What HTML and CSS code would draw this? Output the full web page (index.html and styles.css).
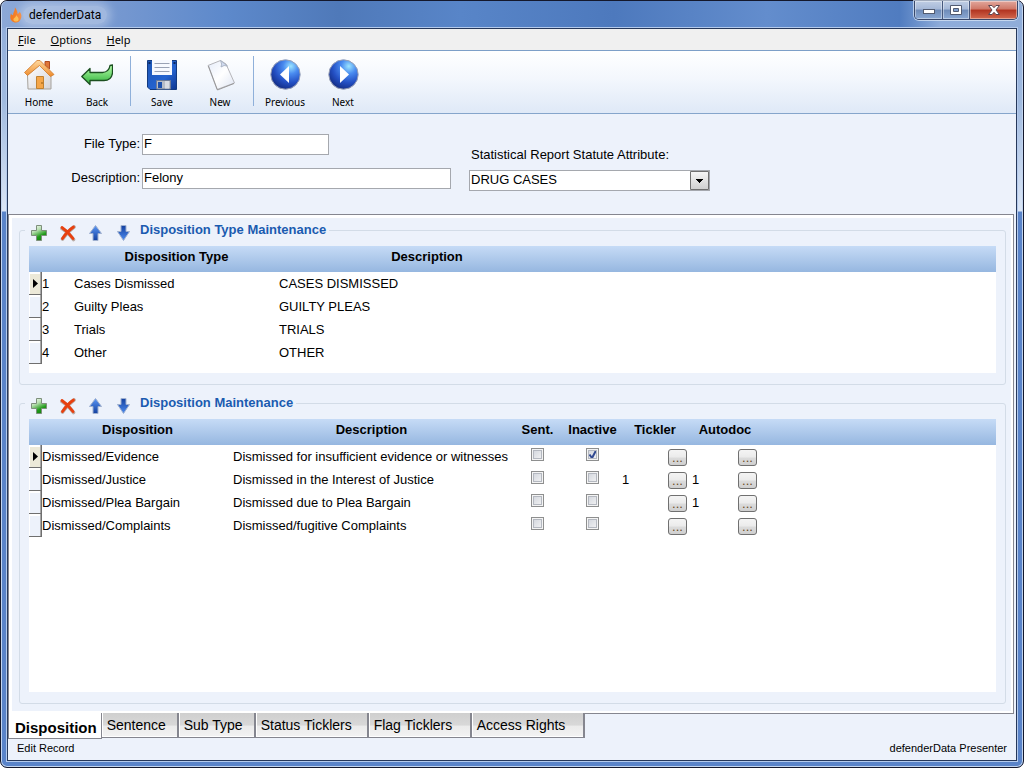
FILE: index.html
```
<!DOCTYPE html>
<html lang="en">
<head>
    <meta charset="UTF-8">
    <title>defenderData</title>
    <link rel="stylesheet" href="styles.css">
</head>
<body>
<!-- Shared icons -->
<svg class="sprite" aria-hidden="true">
    <defs>
        <linearGradient id="green" x1="0" y1="0" x2=".5" y2="1">
            <stop offset="0" stop-color="#ffffff"/>
            <stop offset=".4" stop-color="#b9dfb2"/>
            <stop offset=".8" stop-color="#1f9a18"/>
            <stop offset="1" stop-color="#178a12"/>
        </linearGradient>
        <linearGradient id="blueUp" x1="0" y1="0" x2="0" y2="1">
            <stop offset="0" stop-color="#5b97f5"/>
            <stop offset="1" stop-color="#123f9f"/>
        </linearGradient>
        <linearGradient id="blueDown" x1="0" y1="0" x2="0" y2="1">
            <stop offset="0" stop-color="#123f9f"/>
            <stop offset="1" stop-color="#4f8df0"/>
        </linearGradient>
        <radialGradient id="ball" cx=".68" cy=".22" r=".85">
            <stop offset="0" stop-color="#9be4ff"/>
            <stop offset=".3" stop-color="#4a8cf0"/>
            <stop offset=".65" stop-color="#2450c4"/>
            <stop offset="1" stop-color="#122a80"/>
        </radialGradient>
    </defs>
    <symbol id="icon-add" viewBox="0 0 18 18">
        <path d="M6.500 1.500h5v5h5v5h-5v5h-5v-5h-5v-5h5z" fill="url(#green)" stroke="#7d8f7b"/>
    </symbol>
    <symbol id="icon-delete" viewBox="0 0 18 18">
        <path d="M4 4.500Q10 8 15.500 15.500M16 3Q9.500 7.500 4.500 15" fill="none" stroke="#b9aaa4" stroke-width="3.600" stroke-linecap="round"/>
        <path d="M4 3.500Q10 7.500 15 14.500M15.500 3Q9.500 7 4.500 14.500" fill="none" stroke="#e8400f" stroke-width="2.800" stroke-linecap="round"/>
    </symbol>
    <symbol id="icon-up" viewBox="0 0 18 18">
        <path d="M9.500 1.500L15.500 9.500H12V16.500H7V9.500H3.500z" fill="url(#blueUp)" stroke="#9fb0cf"/>
    </symbol>
    <symbol id="icon-down" viewBox="0 0 18 18">
        <path d="M7 1.500h5v6h3.500L9.500 16.500 3.500 7.500H7z" fill="url(#blueDown)" stroke="#9fb0cf"/>
    </symbol>
</svg>

<div class="window">
    <header class="titlebar">
        <svg class="app-icon" viewBox="0 0 14 16" aria-hidden="true">
            <path d="M6 .5C8 3 8.500 5 8.500 7 10 6.500 10.500 5.500 10.600 4.500 12.500 7 13.200 9.500 11.500 12.500 10.500 14.500 9 15.500 7 15.500 3.500 15.500 1 13 1.300 9.500 1.400 8.500 1.600 7.500 2 6.500 2.500 7.500 3 8 4 8.200 4 5.500 6 4 6 .5z" fill="#f47a20"/>
            <path d="M7.500 8C8 10 10 10.500 9.500 13 9 15 5 15 4.500 13 4 11 7 10.500 7.500 8z" fill="#fdb94a"/>
        </svg>
        <span class="title">defenderData</span>
        <div class="window-buttons">
            <button type="button" class="win-btn minimize" aria-label="Minimize">
                <svg width="14" height="12" viewBox="0 0 14 12"><rect x="1.500" y="5.500" width="11" height="4" fill="#fff" stroke="#525b70"/></svg>
            </button>
            <button type="button" class="win-btn maximize" aria-label="Maximize">
                <svg width="12" height="12" viewBox="0 0 12 12"><path d="M.5 1.500h11v9H.5z" fill="#fff" stroke="#525b70"/><path d="M3.500 4.500h5v3h-5z" fill="#7f9fcf" stroke="#525b70"/></svg>
            </button>
            <button type="button" class="win-btn close" aria-label="Close">
                <svg width="12" height="12" viewBox="0 0 12 12"><path d="M.6 1.500H4L6 3.700 8 1.500h3.400L8 6l3.400 4.500H8L6 8.300 4 10.500H.6L4 6z" fill="#fff" stroke="#5c4550"/></svg>
            </button>
        </div>
    </header>

    <div class="client">
        <nav class="menubar">
            <button type="button"><u>F</u>ile</button>
            <button type="button"><u>O</u>ptions</button>
            <button type="button"><u>H</u>elp</button>
        </nav>

        <div class="toolbar">
            <button type="button" class="tool">
                <svg viewBox="0 0 32 32" aria-hidden="true">
                    <defs>
                        <linearGradient id="roof" x1="0" y1="0" x2="0" y2="1"><stop offset="0" stop-color="#ffd9a0"/><stop offset="1" stop-color="#ee8a2a"/></linearGradient>
                        <linearGradient id="wall" x1="0" y1="0" x2="1" y2="1"><stop offset="0" stop-color="#fff"/><stop offset="1" stop-color="#d4d4d8"/></linearGradient>
                    </defs>
                    <path d="M22 2.500h4.500V10L22 6z" fill="#e07638" stroke="#b04c20"/>
                    <path d="M4.500 16L17 5.500 28 16V30H5z" fill="url(#wall)" stroke="#a6a29c"/>
                    <path d="M14 1.500L1.500 13.500 4.500 16.500 16.500 6.500 27.500 17.500 31 15.500 17 1.500z" fill="url(#roof)" stroke="#d07a28" stroke-width=".8"/>
                    <path d="M13.500 17.500h7V29.500h-7z" fill="#f5a648" stroke="#c1812f"/>
                    <circle cx="19" cy="24" r=".8" fill="#875211"/>
                </svg>
                <span>Home</span>
            </button>
            <button type="button" class="tool">
                <svg viewBox="0 0 32 32" aria-hidden="true">
                    <defs><linearGradient id="back" x1="0" y1="0" x2="0" y2="1"><stop offset="0" stop-color="#b8ffab"/><stop offset="1" stop-color="#2fb13b"/></linearGradient></defs>
                    <path d="M.8 17.500L9 9.500V13.500H21.500Q28 13 29 6.500L31.500 6V14Q30.500 21.500 23 21.500H9V25.500z" fill="url(#back)" stroke="#1b4f20" stroke-width="1.300" stroke-linejoin="round"/>
                </svg>
                <span>Back</span>
            </button>
            <div class="separator"></div>
            <button type="button" class="tool">
                <svg viewBox="0 0 32 32" aria-hidden="true">
                    <defs><linearGradient id="disk" x1="0" y1="0" x2="1" y2="1"><stop offset="0" stop-color="#1c55b4"/><stop offset=".6" stop-color="#2563d0"/><stop offset="1" stop-color="#0c3590"/></linearGradient></defs>
                    <path d="M1.500 1.500h29v29H4L1.500 28z" fill="url(#disk)" stroke="#123a80"/>
                    <path d="M6 1h20v15H6z" fill="#f7f9ff"/>
                    <path d="M8.500 4.500h15M8.500 8.500h15M8.500 12.500h15" stroke="#9aa2b5"/>
                    <path d="M10.500 21.500h14v8.500h-14z" fill="#b8bcc6" stroke="#6f7c96"/>
                    <path d="M12 23h4v6h-4z" fill="#1d50ad"/>
                    <path d="M19 22v7.500h4V22z" fill="#dadce2"/>
                    <path d="M2.500 3h2v2h-2zM27.500 3h2v2h-2z" fill="#0b2860"/>
                </svg>
                <span>Save</span>
            </button>
            <button type="button" class="tool">
                <svg viewBox="0 0 32 32" aria-hidden="true">
                    <defs><linearGradient id="page" x1="0" y1="0" x2="1" y2="1"><stop offset="0" stop-color="#e5ecfa"/><stop offset=".5" stop-color="#fff"/><stop offset="1" stop-color="#dde4f2"/></linearGradient></defs>
                    <path d="M4 6.500L16.500 1.500 22 5 30.500 24 13 30.500z" fill="url(#page)" stroke="#b5b5ba"/>
                    <path d="M4.500 7L13.500 31 30 24.500" fill="none" stroke="#8d8c8c" stroke-width=".8"/>
                    <path d="M16.500 1.500Q18.500 5.500 17 8 20 5.500 23.500 7z" fill="#d1dcf1" stroke="#9fa9bb" stroke-width=".8"/>
                </svg>
                <span>New</span>
            </button>
            <div class="separator"></div>
            <button type="button" class="tool">
                <svg viewBox="0 0 32 32" aria-hidden="true">
                    <circle cx="16.500" cy="15.500" r="14.700" fill="url(#ball)" stroke="#99a0b5"/>
                    <path d="M20 7v17l-9-8.500z" fill="#fff"/>
                </svg>
                <span>Previous</span>
            </button>
            <button type="button" class="tool">
                <svg viewBox="0 0 32 32" aria-hidden="true">
                    <circle cx="16.500" cy="15.500" r="14.700" fill="url(#ball)" stroke="#99a0b5"/>
                    <path d="M13 7v17l9-8.500z" fill="#fff"/>
                </svg>
                <span>Next</span>
            </button>
        </div>

        <!-- Record header -->
        <form class="record">
            <div class="record-fields">
                <label for="fileType">File Type:</label>
                <input type="text" id="fileType" class="short" value="F">
                <label for="description">Description:</label>
                <input type="text" id="description" value="Felony">
            </div>
            <div class="record-statute">
                <label for="statute">Statistical Report Statute Attribute:</label>
                <select id="statute">
                    <option>DRUG CASES</option>
                </select>
            </div>
        </form>

        <!-- Disposition tab -->
        <main class="tab-page">
            <div class="panel">
                <fieldset>
                    <legend>
                        <span class="legend-row">
                            <button type="button" aria-label="Add type"><svg><use href="#icon-add"/></svg></button>
                            <button type="button" aria-label="Delete type"><svg><use href="#icon-delete"/></svg></button>
                            <button type="button" aria-label="Move type up"><svg><use href="#icon-up"/></svg></button>
                            <button type="button" aria-label="Move type down"><svg><use href="#icon-down"/></svg></button>
                            <span class="legend-text">Disposition Type Maintenance</span>
                        </span>
                    </legend>
                    <div class="grid types">
                        <table>
                            <colgroup>
                                <col class="c-handle"><col class="c-num"><col class="c-type"><col class="c-type-desc"><col>
                            </colgroup>
                            <thead>
                                <tr><th></th><th></th><th>Disposition Type</th><th>Description</th><th></th></tr>
                            </thead>
                            <tbody>
                                <tr class="current"><td class="handle"></td><td>1</td><td>Cases Dismissed</td><td>CASES DISMISSED</td><td></td></tr>
                                <tr><td class="handle"></td><td>2</td><td>Guilty Pleas</td><td>GUILTY PLEAS</td><td></td></tr>
                                <tr><td class="handle"></td><td>3</td><td>Trials</td><td>TRIALS</td><td></td></tr>
                                <tr><td class="handle"></td><td>4</td><td>Other</td><td>OTHER</td><td></td></tr>
                            </tbody>
                        </table>
                    </div>
                </fieldset>

                <fieldset class="fill">
                    <legend>
                        <span class="legend-row">
                            <button type="button" aria-label="Add disposition"><svg><use href="#icon-add"/></svg></button>
                            <button type="button" aria-label="Delete disposition"><svg><use href="#icon-delete"/></svg></button>
                            <button type="button" aria-label="Move disposition up"><svg><use href="#icon-up"/></svg></button>
                            <button type="button" aria-label="Move disposition down"><svg><use href="#icon-down"/></svg></button>
                            <span class="legend-text">Disposition Maintenance</span>
                        </span>
                    </legend>
                    <div class="grid">
                        <table>
                            <colgroup>
                                <col class="c-handle"><col class="c-disp"><col class="c-desc"><col class="c-check"><col class="c-check"><col class="c-link"><col class="c-link"><col>
                            </colgroup>
                            <thead>
                                <tr><th></th><th>Disposition</th><th>Description</th><th>Sent.</th><th>Inactive</th><th>Tickler</th><th>Autodoc</th><th></th></tr>
                            </thead>
                            <tbody>
                                <tr class="current">
                                    <td class="handle"></td><td>Dismissed/Evidence</td><td>Dismissed for insufficient evidence or witnesses</td>
                                    <td class="check"><input type="checkbox" aria-label="Sent."></td>
                                    <td class="check"><input type="checkbox" aria-label="Inactive" checked></td>
                                    <td><div class="link-cell"><span></span><button type="button">...</button></div></td>
                                    <td><div class="link-cell"><span></span><button type="button">...</button></div></td>
                                    <td></td>
                                </tr>
                                <tr>
                                    <td class="handle"></td><td>Dismissed/Justice</td><td>Dismissed in the Interest of Justice</td>
                                    <td class="check"><input type="checkbox" aria-label="Sent."></td>
                                    <td class="check"><input type="checkbox" aria-label="Inactive"></td>
                                    <td><div class="link-cell"><span>1</span><button type="button">...</button></div></td>
                                    <td><div class="link-cell"><span>1</span><button type="button">...</button></div></td>
                                    <td></td>
                                </tr>
                                <tr>
                                    <td class="handle"></td><td>Dismissed/Plea Bargain</td><td>Dismissed due to Plea Bargain</td>
                                    <td class="check"><input type="checkbox" aria-label="Sent."></td>
                                    <td class="check"><input type="checkbox" aria-label="Inactive"></td>
                                    <td><div class="link-cell"><span></span><button type="button">...</button></div></td>
                                    <td><div class="link-cell"><span>1</span><button type="button">...</button></div></td>
                                    <td></td>
                                </tr>
                                <tr>
                                    <td class="handle"></td><td>Dismissed/Complaints</td><td>Dismissed/fugitive Complaints</td>
                                    <td class="check"><input type="checkbox" aria-label="Sent."></td>
                                    <td class="check"><input type="checkbox" aria-label="Inactive"></td>
                                    <td><div class="link-cell"><span></span><button type="button">...</button></div></td>
                                    <td><div class="link-cell"><span></span><button type="button">...</button></div></td>
                                    <td></td>
                                </tr>
                            </tbody>
                        </table>
                    </div>
                </fieldset>
            </div>
        </main>

        <div class="tabs">
            <button type="button" class="active">Disposition</button>
            <button type="button" class="tab-small">Sentence</button>
            <button type="button" class="tab-small">Sub Type</button>
            <button type="button" class="tab-large">Status Ticklers</button>
            <button type="button" class="tab-medium">Flag Ticklers</button>
            <button type="button" class="tab-large">Access Rights</button>
            <div class="tabs-rest"></div>
        </div>

        <footer class="statusbar">
            <span>Edit Record</span>
            <span>defenderData Presenter</span>
        </footer>
    </div>
</div>
</body>
</html>
```
FILE: styles.css
```
* {
  box-sizing: border-box;
}
body {
  margin: 0;
  font-family: "Liberation Sans", Arial, sans-serif;
  font-size: 13px;
  color: #000;
  background: #fff;
}
button {
  margin: 0;
  padding: 0;
  border: none;
  background: none;
  font: inherit;
  color: inherit;
}
svg {
  display: block;
}
.sprite {
  width: 0;
  height: 0;
}

/* Window frame */
.window {
  display: flex;
  flex-direction: column;
  min-height: 100vh;
  padding: 0 6px 6px;
  border: 1px solid #14182c;
  border-radius: 7px;
  box-shadow: inset 0 0 0 1px #c3d5ef;
  background: linear-gradient(#8fabd9, #a0badf 100px, #dbe6f6 210px, #5a84c9 211px);
}
.titlebar {
  display: flex;
  align-items: flex-start;
  height: 27px;
  margin: 0 -5px;
  padding: 0 4px 0 7px;
  border-radius: 6px 6px 0 0;
  background: linear-gradient(90deg, #8ca8d7, #7497d0 12%, #5d89cb 22%, #4f79b9 33%, #5885c8 45%, #4d79bd 60%, #638dcd 75%, #507cc0 88%, #8eacda 92%, #90add9);
}
.app-icon {
  width: 14px;
  height: 16px;
  margin-top: 6px;
}
.title {
  padding: 0 6px;
  margin-top: 5px;
  font: 12px/18px Roboto, sans-serif;
  border-radius: 9px;
  background: rgba(255, 255, 255, .3);
  box-shadow: 0 0 8px 4px rgba(255, 255, 255, .3);
}
.window-buttons {
  display: flex;
  margin-left: auto;
  border: 1px solid #38486b;
  border-top: none;
  border-radius: 0 0 5px 5px;
  box-shadow: 0 0 0 1px rgba(220, 232, 248, .7);
  overflow: hidden;
}
.win-btn {
  display: flex;
  justify-content: center;
  align-items: center;
  width: 28px;
  height: 18px;
  border-right: 1px solid #46587c;
  box-shadow: inset 0 0 0 1px rgba(255, 255, 255, .4);
  background: linear-gradient(#c0cee4, #a5b8d7 45%, #6e8bb8 50%, #8ba9d4);
}
.maximize {
  width: 27px;
}
.close {
  width: 47px;
  border-right: none;
  background: linear-gradient(#e2a79c, #cf7767 45%, #b13320 50%, #d3694f);
}
.client {
  flex: 1;
  display: flex;
  flex-direction: column;
  border: 1px solid #26385a;
  outline: 1px solid #b4caec;
  background: #edf2fb;
}

/* Menu and toolbar */
.menubar {
  display: flex;
  gap: 15px;
  padding: 0 10px;
  border-bottom: 1px solid #7d9fc8;
  background: #f0f0f0;
  font: 11px/21px "Noto Sans", sans-serif;
}
.toolbar {
  display: flex;
  height: 63px;
  padding-left: 2px;
  border-bottom: 1px solid #85a5cb;
  background: linear-gradient(#fff, #f3f7fd 45%, #dfe9f7);
}
.tool {
  display: flex;
  flex-direction: column;
  align-items: center;
  width: 58px;
  padding-top: 8px;
  font: 10px/16px "Noto Sans", sans-serif;
}
.tool svg {
  width: 32px;
  height: 32px;
  margin-bottom: 3px;
}
.separator {
  width: 1px;
  margin: 5px 2px 7px 4px;
  background: #8fb0da;
}

/* Record header */
.record {
  display: flex;
  gap: 18px;
  padding: 20px 8px 23px 0;
}
.record-fields {
  display: grid;
  grid-template-columns: 132px 309px;
  grid-auto-rows: 21px;
  gap: 13px 2px;
}
.record-fields label {
  text-align: right;
  line-height: 19px;
}
.record input,
.record select {
  width: 100%;
  height: 21px;
  margin: 0;
  padding: 0 1px 2px;
  border: 1px solid #a5a8ae;
  border-radius: 0;
  background-color: #fff;
  font: inherit;
  color: #000;
}
.record .short {
  width: 187px;
}
.record-statute {
  width: 241px;
  padding-top: 13px;
}
.record-statute label {
  display: block;
  padding: 0 2px;
  margin-bottom: 7px;
  line-height: 16px;
}
.record select {
  appearance: none;
  background: #fff url("data:image/svg+xml,%3Csvg xmlns='http://www.w3.org/2000/svg' width='19' height='19'%3E%3ClinearGradient id='g' x2='0' y2='1'%3E%3Cstop stop-color='%23f6f6f6'/%3E%3Cstop offset='1' stop-color='%23cfcfcf'/%3E%3C/linearGradient%3E%3Cpath d='M.5.5h18v18H.5z' fill='url(%23g)' stroke='%23707070'/%3E%3Cpath d='M6 8h7v1h-1v1h-1v1h-1v1H9v-1H8v-1H7V9H6z'/%3E%3C/svg%3E") right center no-repeat;
}

/* Tab page */
.tab-page {
  flex: 1;
  display: flex;
  margin-right: 2px;
  padding: 3px 2px 2px 3px;
  border: 1px solid #85868f;
  border-bottom: none;
  background: #fff;
}
.panel {
  flex: 1;
  display: flex;
  flex-direction: column;
  gap: 6px;
  padding: 0 5px 7px 7px;
  background: #edf2fb;
}
fieldset {
  margin: 0;
  padding: 4px 5px 11px;
  border: 1px solid #d3dce7;
  border-radius: 3px;
}
fieldset.fill {
  flex: 1;
  display: flex;
  flex-direction: column;
}
legend {
  padding: 0;
}
.legend-row {
  display: flex;
  height: 24px;
  padding-right: 3px;
}
.legend-row button {
  width: 28px;
  padding: 5px 5px 0;
}
.legend-row svg {
  width: 18px;
  height: 18px;
}
.legend-text {
  padding-left: 3px;
  line-height: 23px;
  font-weight: bold;
  color: #1b5bb0;
}

/* Grids */
.grid {
  margin: 0 4px;
  background: #fff;
}
.types {
  min-height: 127px;
}
.fill .grid {
  flex: 1;
}
table {
  width: 100%;
  table-layout: fixed;
  border-collapse: collapse;
}
.c-handle { width: 13px; }
.c-num { width: 32px; }
.c-type { width: 205px; }
.c-type-desc { width: 296px; }
.c-disp { width: 191px; }
.c-desc { width: 277px; }
.c-check { width: 55px; }
.c-link { width: 70px; }
thead tr {
  background: linear-gradient(#c6dbf6, #96b7e0);
}
th {
  height: 26px;
  padding: 0 0 5px;
  line-height: 21px;
}
tbody tr {
  height: 23px;
}
td {
  padding: 0;
  line-height: 23px;
  white-space: nowrap;
}
.handle {
  background: #edf2fb;
  box-shadow: inset -1px -1px #6f6f6f, inset -2px -1px #a8a8a8, inset 1px 2px #fff;
}
.current .handle {
  background: #ece9d8 url("data:image/svg+xml,%3Csvg xmlns='http://www.w3.org/2000/svg' width='5' height='9'%3E%3Cpath d='M0 0l5 4.500L0 9z'/%3E%3C/svg%3E") 4px center no-repeat;
}
.check input {
  display: block;
  appearance: none;
  width: 13px;
  height: 13px;
  margin: 0 auto 4px;
  border: 1px solid #8e8f8f;
  box-shadow: inset 0 0 0 1px #f4f4f4, inset 0 0 0 2px #b4b8c0;
  background: linear-gradient(135deg, #ced2da, #f6f6f6);
}
.check input:checked {
  background: url("data:image/svg+xml,%3Csvg xmlns='http://www.w3.org/2000/svg' width='11' height='11'%3E%3Cpath d='M2.500 5.500l2.500 3.500L9 1.500' fill='none' stroke='%23324a91' stroke-width='2'/%3E%3C/svg%3E"), linear-gradient(135deg, #ced2da, #f6f6f6);
}
.link-cell {
  display: flex;
  align-items: center;
  justify-content: space-between;
  height: 23px;
  padding: 0 3px 0 2px;
}
.link-cell button {
  width: 19px;
  height: 17px;
  margin-top: 2px;
  border: 1px solid #707070;
  border-radius: 3px;
  background: linear-gradient(#f4f4f4, #ebebeb 48%, #dcdcdc 52%, #cfcfcf);
  line-height: 16px;
  color: #6b4a22;
}

/* Tabs */
.tabs {
  display: flex;
  align-items: flex-start;
  margin-right: 2px;
}
.tabs button {
  height: 25px;
  padding: 0 0 0 5px;
  border-right: 2px solid #85868f;
  border-bottom: 1px solid #85868f;
  box-shadow: inset 1px -1px #fff;
  background: linear-gradient(#cfcfcf, #d8d8d8 50%, #ebebeb 55%, #f3f3f3);
  font-size: 14px;
  line-height: 24px;
  text-align: left;
}
.tabs .tab-small {
  min-width: 77px;
}
.tabs .tab-medium {
  min-width: 103px;
}
.tabs .tab-large {
  min-width: 113px;
}
.tabs .active {
  height: 26px;
  padding: 3px 4px 0 6px;
  border-left: 1px solid #85868f;
  border-right-width: 1px;
  background: #fff;
  font-size: 15px;
  font-weight: bold;
}
.tabs-rest {
  flex: 1;
  height: 1px;
  background: #85868f;
}
.statusbar {
  display: flex;
  justify-content: space-between;
  padding: 0 9px 3px;
  font-size: 11px;
  line-height: 18px;
}
```
